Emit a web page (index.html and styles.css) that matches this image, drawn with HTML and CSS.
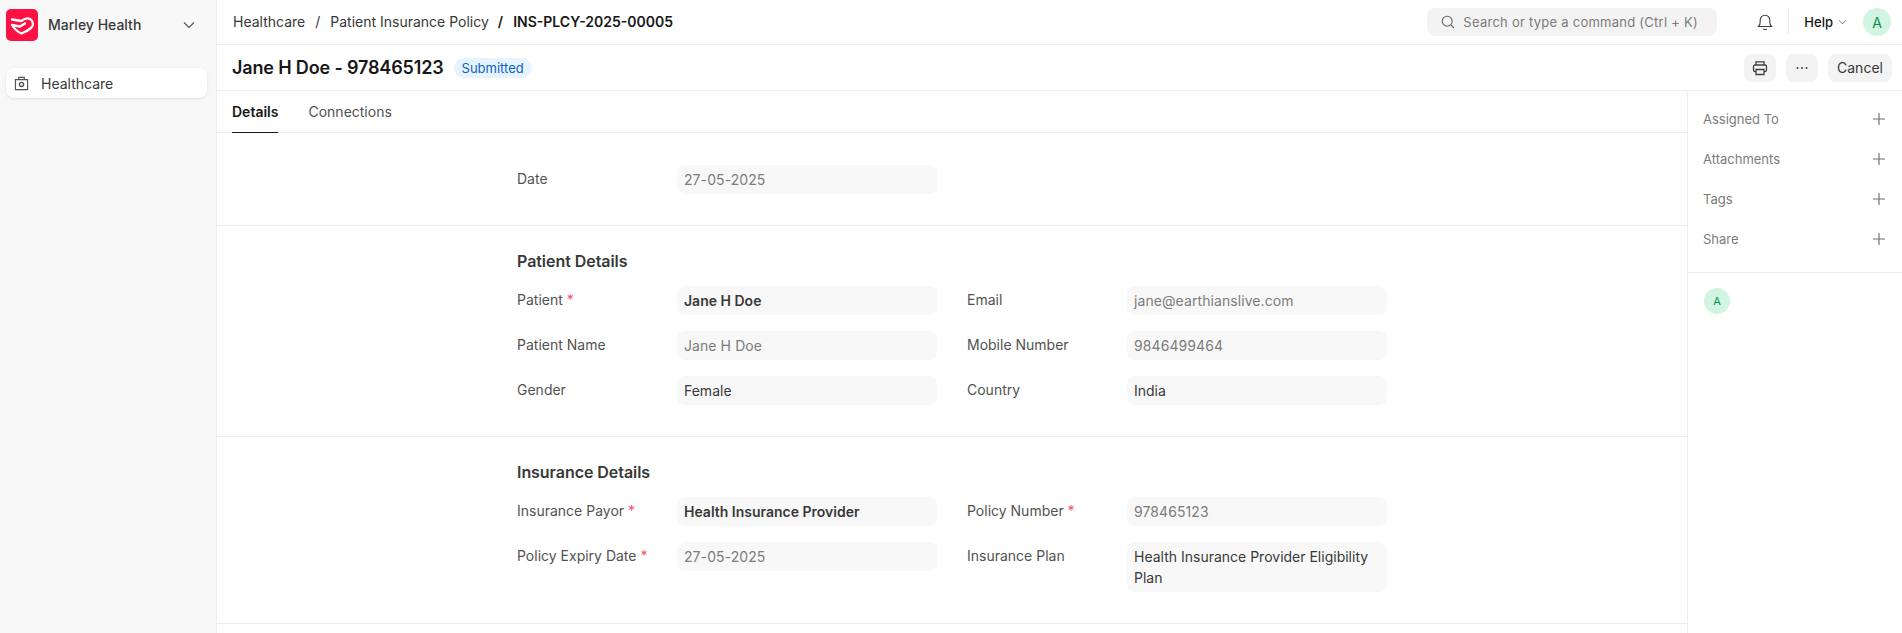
FILE: index.html
```html
<!DOCTYPE html>
<html lang="en">
<head>
<meta charset="utf-8">
<title>INS-PLCY-2025-00005</title>
<link rel="stylesheet" href="styles.css">
</head>
<body>
<div class="app">
  <aside class="sidebar">
    <div class="brand">
      <svg class="logo" viewBox="0 0 32 32"><rect width="32" height="32" rx="5" fill="#fe0f44"/><path d="M6 10.500 L15.500 12 C18 10 21 8.500 24 10 C27.500 12 28 16.500 25 19 C21.500 22 18 23.500 15.500 24.500 C12 23 8.500 20 6 16 L14 17.500 L19 14.500" fill="none" stroke="#fff" stroke-width="2.300" stroke-linejoin="round" stroke-linecap="round"/></svg>
      <span class="brand-name">Marley Health</span>
      <svg class="brand-chev" viewBox="0 0 12 8"><path d="M1 1.500 L6 6.500 L11 1.500" fill="none" stroke="#525252" stroke-width="1.100"/></svg>
    </div>
    <div class="nav-item">
      <svg class="nav-icon" viewBox="0 0 16 16" fill="none" stroke="#525252" stroke-width="1.200"><path d="M1.500 3.800h13v10.700h-13z"/><path d="M5 3.800V1.500h6v2.300"/><circle cx="8" cy="9" r="2.200" stroke-width="1.500"/></svg>
      <span>Healthcare</span>
    </div>
  </aside>
  <main class="main">
    <header class="topbar">
      <nav class="crumbs">
        <span>Healthcare</span><span class="sep">/</span><span>Patient Insurance Policy</span><span class="sep strong">/</span><span class="current">INS-PLCY-2025-00005</span>
      </nav>
      <div class="search">
        <svg class="search-icon" viewBox="0 0 14 14" fill="none" stroke="#666" stroke-width="1.100"><circle cx="6.200" cy="6.200" r="5"/><path d="M10 10l3 3"/></svg>
        <span>Search or type a command (Ctrl + K)</span>
      </div>
      <svg class="bell" viewBox="0 0 16 18" fill="none" stroke="#404040" stroke-width="1.100"><path d="M1.500 13.500c1.300-1.200 1.700-2.400 1.700-4.500V7a4.800 4.800 0 0 1 9.600 0v2c0 2.100.4 3.300 1.700 4.500z"/><path d="M6.300 15.800c.9.900 2.500.900 3.400 0"/></svg>
      <span class="divider"></span>
      <span class="help">Help</span>
      <svg class="help-chev" viewBox="0 0 10 6"><path d="M1 1l4 4 4-4" fill="none" stroke="#666" stroke-width="1"/></svg>
      <span class="avatar avatar-lg">A</span>
    </header>
    <section class="pagehead">
      <h1 class="title">Jane H Doe - 978465123</h1>
      <span class="badge">Submitted</span>
      <div class="actions">
        <button class="btn btn-icon"><svg viewBox="0 0 16 16" width="16" height="16" fill="none" stroke="#404040" stroke-width="1.300"><path d="M4 5V1.800h8V5"/><rect x="1.500" y="5" width="13" height="6.500" rx="1.500"/><path d="M4 9.500h8v5H4z" fill="#f3f3f3"/></svg></button>
        <button class="btn btn-icon"><svg viewBox="0 0 16 16" width="16" height="16" fill="#404040"><circle cx="3.500" cy="8" r="1"/><circle cx="8" cy="8" r="1"/><circle cx="12.500" cy="8" r="1"/></svg></button>
        <button class="btn btn-text">Cancel</button>
      </div>
    </section>
    <div class="content">
      <div class="formarea">
        <div class="tabs">
          <span class="tab active">Details</span>
          <span class="tab">Connections</span>
        </div>
        <section class="fsec fsec-date">
          <div class="grid">
            <div class="field"><label>Date</label><div class="ctl muted">27-05-2025</div></div>
          </div>
        </section>
        <section class="fsec">
          <h2 class="sechead">Patient Details</h2>
          <div class="grid">
            <div class="field"><label>Patient <i>*</i></label><div class="ctl bold">Jane H Doe</div></div>
            <div class="field"><label>Email</label><div class="ctl muted">jane@earthianslive.com</div></div>
            <div class="field"><label>Patient Name</label><div class="ctl muted">Jane H Doe</div></div>
            <div class="field"><label>Mobile Number</label><div class="ctl muted">9846499464</div></div>
            <div class="field"><label>Gender</label><div class="ctl">Female</div></div>
            <div class="field"><label>Country</label><div class="ctl">India</div></div>
          </div>
        </section>
        <section class="fsec">
          <h2 class="sechead">Insurance Details</h2>
          <div class="grid">
            <div class="field"><label>Insurance Payor <i>*</i></label><div class="ctl bold">Health Insurance Provider</div></div>
            <div class="field"><label>Policy Number <i>*</i></label><div class="ctl muted">978465123</div></div>
            <div class="field"><label>Policy Expiry Date <i>*</i></label><div class="ctl muted">27-05-2025</div></div>
            <div class="field"><label>Insurance Plan</label><div class="ctl">Health Insurance Provider Eligibility Plan</div></div>
          </div>
        </section>
      </div>
      <aside class="rail">
        <div class="rail-list">
          <div class="rail-row"><span>Assigned To</span><svg class="plus" viewBox="0 0 12 12"><path d="M6 0v12M0 6h12" stroke="#6b6b6b" stroke-width="1.100"/></svg></div>
          <div class="rail-row"><span>Attachments</span><svg class="plus" viewBox="0 0 12 12"><path d="M6 0v12M0 6h12" stroke="#6b6b6b" stroke-width="1.100"/></svg></div>
          <div class="rail-row"><span>Tags</span><svg class="plus" viewBox="0 0 12 12"><path d="M6 0v12M0 6h12" stroke="#6b6b6b" stroke-width="1.100"/></svg></div>
          <div class="rail-row"><span>Share</span><svg class="plus" viewBox="0 0 12 12"><path d="M6 0v12M0 6h12" stroke="#6b6b6b" stroke-width="1.100"/></svg></div>
        </div>
        <div class="rail-users"><span class="avatar avatar-sm">A</span></div>
      </aside>
    </div>
  </main>
</div>
</body>
</html>
```

FILE: styles.css
```css
* { box-sizing: border-box; }
html, body { margin: 0; height: 100%; overflow: hidden; }
body { font-family: Inter, "Liberation Sans", sans-serif; font-size: 14px; color: #383838; background: #fff; }
.app { display: flex; height: 633px; }

.sidebar { width: 217px; flex: none; background: #f8f8f8; border-right: 1px solid #ededed; padding: 9px 9px 0 6px; }
.brand { display: flex; align-items: center; height: 32px; }
.logo { width: 32px; height: 32px; flex: none; }
.brand-name { margin-left: 10px; font-weight: 500; color: #383838; flex: 1; margin-top: -1px; }
.brand-chev { width: 12px; height: 8px; margin-right: 12px; }
.nav-item { display: flex; align-items: center; height: 30px; margin-top: 27px; background: #fff; border-radius: 8px; box-shadow: 0 1px 3px rgba(0,0,0,.1); padding-left: 8px; color: #383838; }
.nav-icon { width: 15px; height: 15px; margin-right: 12px; }

.main { flex: 1; min-width: 0; display: flex; flex-direction: column; }
.topbar { display: flex; align-items: center; height: 45px; border-bottom: 1px solid #ededed; padding: 0 11px 0 16px; flex: none; }
.crumbs { display: flex; align-items: center; flex: 1; margin-top: -1px; color: #383838; }
.sep { margin: 0 10px; }
.sep.strong { margin-left: 9px; }
.sep.strong, .current { font-weight: 600; color: #171717; }
.search { display: flex; align-items: center; width: 290px; height: 28px; background: #f3f3f3; border-radius: 8px; padding-left: 14px; color: #7c7c7c; font-size: 13px; letter-spacing: .25px; }
.search-icon { width: 14px; height: 14px; margin-right: 8px; }
.bell { width: 16px; height: 18px; margin-left: 40px; }
.divider { width: 1px; height: 24px; background: #ededed; margin: 0 15px 0 15px; }
.help { font-size: 13px; font-weight: 500; color: #171717; }
.help-chev { width: 9px; height: 6px; margin-left: 5px; }
.avatar { display: flex; align-items: center; justify-content: center; border-radius: 50%; background: #d1f5e0; color: #0e8a4f; }
.avatar-lg { width: 28px; height: 28px; margin-left: 16px; font-size: 14px; }
.avatar-sm { width: 26px; height: 26px; font-size: 11px; }

.pagehead { display: flex; align-items: center; height: 46px; flex: none; border-bottom: 1px solid #ededed; padding: 0 10px 0 15px; }
.title { margin: 0; font-size: 18px; font-weight: 600; letter-spacing: -.15px; color: #171717; }
.badge { margin-left: 10px; height: 20px; display: flex; align-items: center; padding: 0 8px; border-radius: 10px; background: #e6f4ff; color: #0f62c9; font-size: 13px; }
.actions { margin-left: auto; display: flex; gap: 10px; }
.btn { height: 28px; border: 0; border-radius: 8px; background: #f3f3f3; font: inherit; color: #383838; display: flex; align-items: center; justify-content: center; padding: 0; }
.btn-icon { width: 32px; }
.btn-text { width: 64px; }

.content { flex: 1; display: flex; min-height: 0; }
.formarea { flex: 1; min-width: 0; }
.tabs { display: flex; gap: 30px; height: 42px; border-bottom: 1px solid #ededed; padding-left: 15px; }
.tab { display: flex; align-items: center; color: #525252; height: 42px; border-bottom: 1px solid transparent; }
.tab.active { color: #171717; font-weight: 600; border-bottom-color: #171717; }

.fsec { border-bottom: 1px solid #ededed; padding: 24px 0 31px 300px; }
.fsec-date { padding-top: 32px; }
.sechead { margin: 0 0 14px; font-size: 16px; font-weight: 600; line-height: 22px; letter-spacing: -.05px; color: #383838; }
.grid { display: grid; grid-template-columns: 420px 420px; column-gap: 30px; row-gap: 16px; align-items: start; }
.field { display: flex; }
.field label { width: 160px; flex: none; padding-top: 4px; line-height: 20px; color: #525252; }
.field label i { color: #f4506f; font-style: normal; }
.ctl { width: 260px; min-height: 29px; padding: 4px 7px; background: #f8f8f8; border-radius: 8px; line-height: 21px; color: #383838; }
.ctl.muted { color: #7c7c7c; letter-spacing: .08px; }
.ctl.bold { font-weight: 600; }

.rail { width: 215px; flex: none; border-left: 1px solid #ededed; }
.rail-list { padding: 8px 15px 13px 15px; border-bottom: 1px solid #ededed; }
.rail-row { display: flex; align-items: center; justify-content: space-between; height: 40px; font-size: 13px; color: #7c7c7c; }
.plus { width: 12px; height: 12px; margin-right: 2px; }
.rail-users { padding: 15px 16px; }
```
